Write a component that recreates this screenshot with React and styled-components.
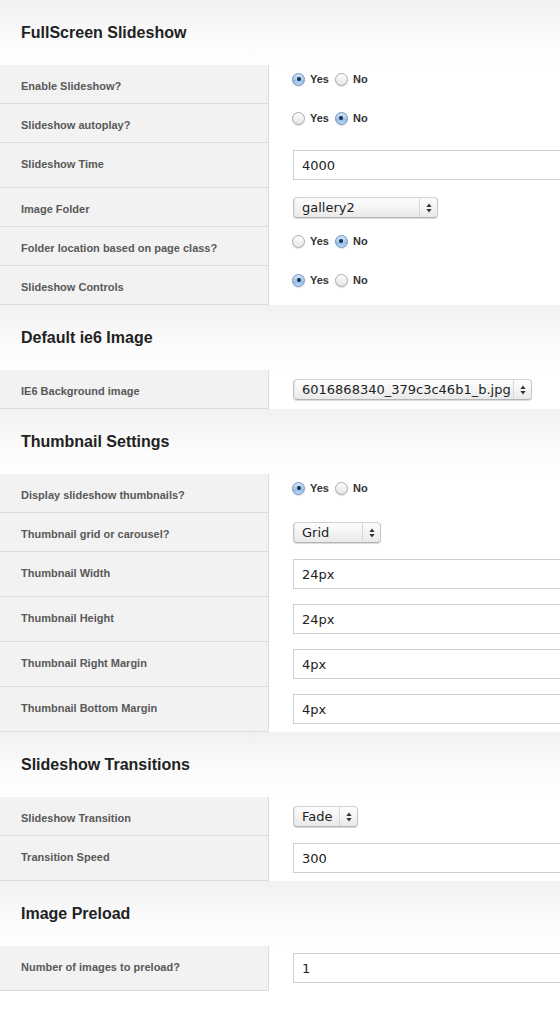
import React from "react";
import styled, { createGlobalStyle } from "styled-components";

const Global = createGlobalStyle`
  html, body { margin: 0; padding: 0; background: #fff; }
  body { overflow: hidden; font-family: "Liberation Sans", Arial, sans-serif; }
  * { box-sizing: border-box; }
`;

const Page = styled.div`
  width: 560px;
  display: flex;
  flex-direction: column;
`;

const SectionHead = styled.div`
  height: 65px;
  display: flex;
  align-items: center;
  padding-left: 21px;
  background: linear-gradient(to bottom, #f1f1f1 0%, #fbfbfb 60%, #ffffff 100%);
`;

const SectionTitle = styled.h2`
  margin: 0;
  font-family: "Liberation Sans", Arial, sans-serif;
  font-weight: bold;
  font-size: 16px;
  color: #222;
`;

const ROW_H = { radio: 39, select: 39, input: 45 };
const PAD_T = { radio: 7, select: 9, input: 7 };

const FieldRow = styled.div`
  display: grid;
  grid-template-columns: 269px 1fr;
  height: ${(p) => ROW_H[p.$kind]}px;
`;

const LabelCell = styled.div`
  padding: 15px 0 0 21px;
  line-height: 13px;
  background: #f2f2f2;
  border-right: 1px solid #dcdcdc;
  border-bottom: 1px solid #dcdcdc;
  font-size: 11px;
  font-weight: bold;
  color: #595959;
`;

const ControlCell = styled.div`
  display: flex;
  align-items: flex-start;
  padding-top: ${(p) => PAD_T[p.$kind]}px;
  padding-left: ${(p) => (p.$kind === "radio" ? 23 : 24)}px;
  overflow: hidden;
  white-space: nowrap;
`;

const RadioGroup = styled.div`
  display: flex;
  align-items: center;
  height: 14px;
`;

const RadioOption = styled.label`
  display: flex;
  align-items: center;
  gap: 5px;
  margin-right: 6px;
  font-size: 11px;
  font-weight: bold;
  color: #333;
`;

const RadioDot = styled.span`
  width: 13px;
  height: 13px;
  border-radius: 50%;
  display: flex;
  align-items: center;
  justify-content: center;
  border: 1px solid ${(p) => (p.$checked ? "#6b93c4" : "#a9a9a9")};
  background: ${(p) =>
    p.$checked
      ? "linear-gradient(to bottom, #d3e5f8 0%, #a9c9ee 50%, #8db7e8 51%, #bcd8f6 100%)"
      : "linear-gradient(to bottom, #ffffff 0%, #f2f2f2 50%, #e4e4e4 100%)"};
  box-shadow: 0 1px 1px rgba(0, 0, 0, 0.12);
  &::after {
    content: "";
    display: ${(p) => (p.$checked ? "block" : "none")};
    width: 4px;
    height: 4px;
    border-radius: 50%;
    background: #1b2c45;
  }
`;

const SelectBox = styled.div`
  width: ${(p) => p.$w}px;
  height: 21px;
  display: flex;
  align-items: stretch;
  border: 1px solid #c6c6c6;
  border-top-color: #d2d2d2;
  border-bottom-color: #b4b4b4;
  border-radius: 4px;
  background: linear-gradient(to bottom, #fdfdfd 0%, #f4f4f4 50%, #e9e9e9 100%);
  box-shadow: 0 1px 1px rgba(0, 0, 0, 0.15), inset 1px 0 0 #e2e2e2;
  font-family: "DejaVu Sans", "Liberation Sans", sans-serif;
  font-size: 13px;
  color: #222;
`;

const SelectText = styled.span`
  flex: 1;
  display: flex;
  align-items: center;
  padding-left: 8px;
`;

const SelectArrows = styled.span`
  width: 18px;
  display: flex;
  align-items: center;
  justify-content: center;
  border-left: 1px solid #d8d8d8;
`;

const TextInput = styled.div`
  width: 320px;
  flex-shrink: 0;
  height: 30px;
  display: flex;
  align-items: center;
  padding-left: 8px;
  border: 1px solid #cfcfcf;
  background: #fff;
  font-family: "DejaVu Sans", "Liberation Sans", sans-serif;
  font-size: 13px;
  color: #222;
`;

const Arrows = () => (
  <svg width="6" height="10" viewBox="0 0 6 10">
    <path d="M3 0.5 L5.6 4 L0.4 4 Z" fill="#333" />
    <path d="M3 9.5 L5.6 6 L0.4 6 Z" fill="#333" />
  </svg>
);

const Radio = ({ value }) => (
  <RadioGroup>
    <RadioOption>
      <RadioDot $checked={value === "yes"} />
      Yes
    </RadioOption>
    <RadioOption>
      <RadioDot $checked={value === "no"} />
      No
    </RadioOption>
  </RadioGroup>
);

const Select = ({ value, w }) => (
  <SelectBox $w={w}>
    <SelectText>{value}</SelectText>
    <SelectArrows>
      <Arrows />
    </SelectArrows>
  </SelectBox>
);

const sections = [
  {
    title: "FullScreen Slideshow",
    rows: [
      { label: "Enable Slideshow?", kind: "radio", value: "yes" },
      { label: "Slideshow autoplay?", kind: "radio", value: "no" },
      { label: "Slideshow Time", kind: "input", value: "4000" },
      { label: "Image Folder", kind: "select", value: "gallery2", w: 145 },
      { label: "Folder location based on page class?", kind: "radio", value: "no" },
      { label: "Slideshow Controls", kind: "radio", value: "yes" },
    ],
  },
  {
    title: "Default ie6 Image",
    rows: [
      { label: "IE6 Background image", kind: "select", value: "6016868340_379c3c46b1_b.jpg", w: 239 },
    ],
  },
  {
    title: "Thumbnail Settings",
    rows: [
      { label: "Display slideshow thumbnails?", kind: "radio", value: "yes" },
      { label: "Thumbnail grid or carousel?", kind: "select", value: "Grid", w: 88 },
      { label: "Thumbnail Width", kind: "input", value: "24px" },
      { label: "Thumbnail Height", kind: "input", value: "24px" },
      { label: "Thumbnail Right Margin", kind: "input", value: "4px" },
      { label: "Thumbnail Bottom Margin", kind: "input", value: "4px" },
    ],
  },
  {
    title: "Slideshow Transitions",
    rows: [
      { label: "Slideshow Transition", kind: "select", value: "Fade", w: 65 },
      { label: "Transition Speed", kind: "input", value: "300" },
    ],
  },
  {
    title: "Image Preload",
    rows: [{ label: "Number of images to preload?", kind: "input", value: "1" }],
  },
];

export default function App() {
  return (
    <>
      <Global />
      <Page>
        {sections.map((s) => (
          <React.Fragment key={s.title}>
            <SectionHead>
              <SectionTitle>{s.title}</SectionTitle>
            </SectionHead>
            {s.rows.map((r) => (
              <FieldRow key={r.label} $kind={r.kind}>
                <LabelCell>{r.label}</LabelCell>
                <ControlCell $kind={r.kind}>
                  {r.kind === "radio" && <Radio value={r.value} />}
                  {r.kind === "select" && <Select value={r.value} w={r.w} />}
                  {r.kind === "input" && <TextInput>{r.value}</TextInput>}
                </ControlCell>
              </FieldRow>
            ))}
          </React.Fragment>
        ))}
      </Page>
    </>
  );
}
